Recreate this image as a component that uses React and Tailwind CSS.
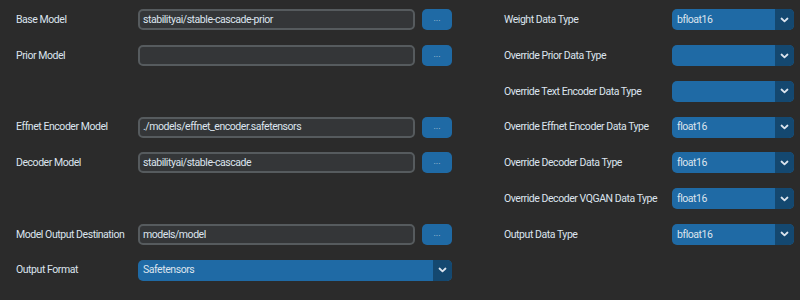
import React from 'react';

const font = { fontFamily: 'Roboto, "Liberation Sans", sans-serif' };

const leftRows = [
  { label: 'Base Model', value: 'stabilityai/stable-cascade-prior', kind: 'entry' },
  { label: 'Prior Model', value: '', kind: 'entry' },
  null,
  { label: 'Effnet Encoder Model', value: './models/effnet_encoder.safetensors', kind: 'entry' },
  { label: 'Decoder Model', value: 'stabilityai/stable-cascade', kind: 'entry' },
  null,
  { label: 'Model Output Destination', value: 'models/model', kind: 'entry' },
  { label: 'Output Format', value: 'Safetensors', kind: 'select' },
];

const rightRows = [
  { label: 'Weight Data Type', value: 'bfloat16' },
  { label: 'Override Prior Data Type', value: '' },
  { label: 'Override Text Encoder Data Type', value: '' },
  { label: 'Override Effnet Encoder Data Type', value: 'float16' },
  { label: 'Override Decoder Data Type', value: 'float16' },
  { label: 'Override Decoder VQGAN Data Type', value: 'float16' },
  { label: 'Output Data Type', value: 'bfloat16' },
  null,
];

const txt = 'text-[10.5px] tracking-[-0.45px] text-[#dce4ee] whitespace-nowrap';

const Chevron = () => (
  <svg width="9" height="6" viewBox="0 0 9 6" fill="none">
    <path d="M1.5 1.5 L4.5 4.3 L7.5 1.5" stroke="#dce4ee" strokeWidth="1.8" strokeLinecap="round" strokeLinejoin="round" />
  </svg>
);

const Select = ({ value, className }) => (
  <div className={`flex h-[21px] rounded-[5px] overflow-hidden bg-[#1f6aa5] ${className}`}>
    <div className={`flex-1 flex items-center pl-[5px] ${txt}`}>{value}</div>
    <div className="w-[19px] bg-[#144870] flex items-center justify-center">
      <Chevron />
    </div>
  </div>
);

const EntryRow = ({ row }) => (
  <div className="flex items-center h-full">
    <div className={`w-[122px] ${txt}`}>{row.label}</div>
    {row.kind === 'entry' ? (
      <>
        <div className={`w-[277px] h-[21px] rounded-[5px] border-2 border-[#565b5e] bg-[#343638] flex items-center pl-[3px] ${txt}`}>
          {row.value}
        </div>
        <div className="ml-[7px] w-[30px] h-[21px] rounded-[5px] bg-[#1f6aa5] flex items-center justify-center text-[9px] text-[#b8c8d8] leading-none pb-[2px]">
          ...
        </div>
      </>
    ) : (
      <Select value={row.value} className="w-[314px]" />
    )}
  </div>
);

export default function App() {
  return (
    <div className="w-[800px] h-[300px] bg-[#2b2b2b] flex pt-[2px]" style={font}>
      <div className="w-[488px] pl-[16px] grid grid-rows-[repeat(8,35.75px)]">
        {leftRows.map((row, i) => (row ? <EntryRow key={i} row={row} /> : <div key={i} />))}
      </div>
      <div className="pl-[16px] grid grid-rows-[repeat(8,35.75px)]">
        {rightRows.map((row, i) =>
          row ? (
            <div key={i} className="flex items-center">
              <div className={`w-[168px] ${txt}`}>{row.label}</div>
              <Select value={row.value} className="w-[122px]" />
            </div>
          ) : (
            <div key={i} />
          )
        )}
      </div>
    </div>
  );
}
